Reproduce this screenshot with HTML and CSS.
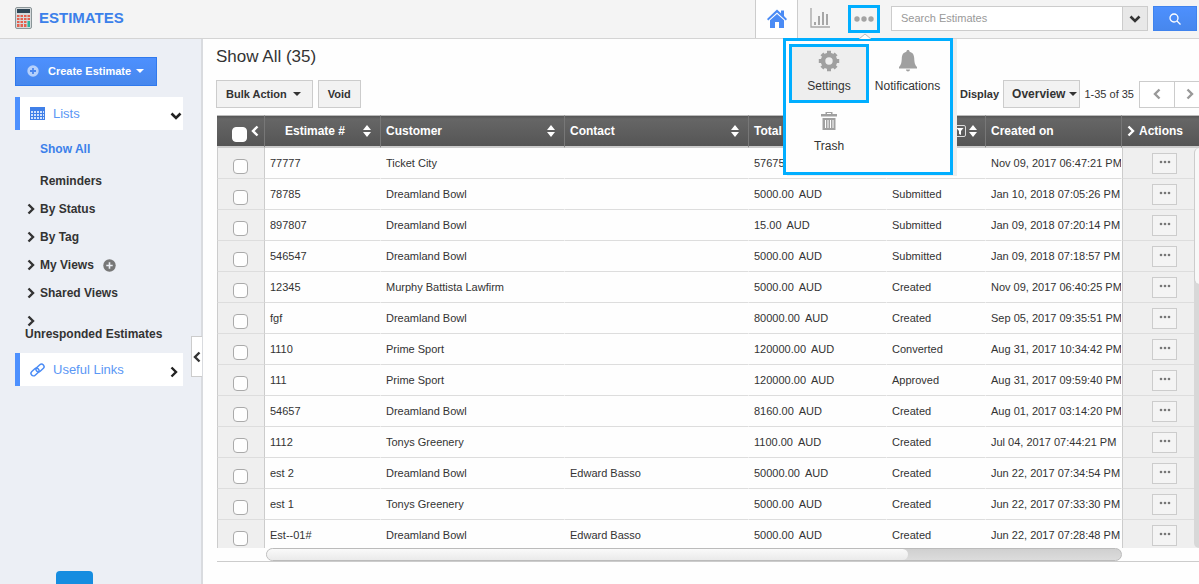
FILE: index.html
```html
<!DOCTYPE html>
<html lang="en">
<head>
<meta charset="utf-8">
<title>Estimates</title>
<link rel="stylesheet" href="styles.css">
</head>
<body>
<svg class="defs" aria-hidden="true">
  <symbol id="right" viewBox="0 0 8 12"><path d="M1.500 1.500L6 6l-4.500 4.500" fill="none" stroke="currentColor" stroke-width="2.400"/></symbol>
  <symbol id="left" viewBox="0 0 8 12"><path d="M6.500 1.500L2 6l4.500 4.500" fill="none" stroke="currentColor" stroke-width="2.400"/></symbol>
  <symbol id="down" viewBox="0 0 12 8"><path d="M1.500 1.500L6 6l4.500-4.500" fill="none" stroke="currentColor" stroke-width="2.600"/></symbol>
  <symbol id="sort" viewBox="0 0 8 12"><path d="M0 5L4 0l4 5zM0 7h8l-4 5z" fill="currentColor"/></symbol>
</svg>

<header class="topbar">
  <h1 class="brand">
    <svg class="brand-icon" width="17" height="22" viewBox="0 0 17 22"><rect x=".5" y=".5" width="16" height="21" rx="1.500" fill="#d5dadc" stroke="#8b9598"/><rect x="2" y="2" width="13" height="4" fill="#2f4656"/><path d="M2 8h2.500v2H2zm3.500 0H8v2H5.500zM9 8h2.500v2H9zm3.500 0H15v2h-2.500zM2 11h2.500v2H2zm3.500 0H8v2H5.500zm3.500 0h2.500v2H9zm3.500 0H15v2h-2.500zM2 14h2.500v2H2zm3.500 0H8v2H5.500zm3.500 0h2.500v2H9zM2 17h2.500v3H2zm3.500 0H8v3H5.500zm3.500 0h2.500v3H9z" fill="#e4604f"/><path d="M12.500 14H15v6h-2.500z" fill="#2bb39b"/></svg>
    ESTIMATES
  </h1>
  <nav class="tabs">
    <a class="tab tab-home" href="#" aria-label="Home"><svg width="20" height="20" viewBox="0 0 20 20" fill="#4a8bf5"><path d="M10 .500L0 10l1.200 1.400L10 3.500l8.800 7.900L20 10l-3-2.900V1.500h-3v2.800z"/><path d="M3 11.300l7-6.200 7 6.200V19h-5v-6H8v6H3z"/></svg></a>
    <a class="tab tab-chart" href="#" aria-label="Reports"><svg width="20" height="20" viewBox="0 0 20 20" fill="none" stroke="#a6a6a6"><path d="M1 0v19h19" stroke-width="1.300"/><path d="M5 14v3M9 8v9M13 4v13M17 6v11" stroke-width="2"/></svg></a>
    <div class="more">
      <button class="more-btn" aria-label="More"><svg width="20" height="6" viewBox="0 0 20 6" fill="#a3a3a3"><circle cx="3" cy="3" r="2.700"/><circle cx="10" cy="3" r="2.700"/><circle cx="17" cy="3" r="2.700"/></svg></button>
      <div class="menu">
        <svg class="menu-tip" width="12" height="6" viewBox="0 0 12 6"><path d="M0 6l6-5 6 5" fill="#fff" stroke="#bbb"/></svg>
        <a class="menu-item active" href="#"><svg width="22" height="22" viewBox="0 0 22 22" fill="none" stroke="#a0a0a0"><circle cx="11" cy="11" r="6" stroke-width="4.600"/><path d="M11 .800v3M11 18.200v3M.800 11h3M18.200 11h3M3.900 3.900l2 2M16.100 16.100l2 2M3.900 18.100l2-2M16.100 5.900l2-2" stroke-width="4"/></svg>Settings</a>
        <a class="menu-item" href="#"><svg width="18" height="22" viewBox="0 0 18 22" fill="#a0a0a0"><path d="M9 0c1 0 1.600.7 1.600 1.700C14 2.500 15 5 15.200 8c.2 5 .8 7 2.800 9v1.500H0V17c2-2 2.600-4 2.800-9C3 5 4 2.500 7.400 1.700 7.400.7 8 0 9 0zM7 19.500h4c0 1.300-.9 2-2 2s-2-.7-2-2z"/></svg>Notifications</a>
        <a class="menu-item" href="#"><svg width="16" height="20" viewBox="0 0 16 20" fill="#a0a0a0"><path d="M0 3h16v2.500H0zM4.500 3V1h7v2H10V2H6v1zM1.500 7h13v12h-13zM4 9v8h1V9zm2.500 0v8h1V9zM9 9v8h1V9zm2.500 0v8h1V9z" fill-rule="evenodd"/></svg>Trash</a>
      </div>
    </div>
  </nav>
  <form class="search">
    <input class="search-box" type="text" placeholder="Search Estimates" aria-label="Search Estimates">
    <button class="search-drop" type="button" aria-label="Search options"><svg width="12" height="8"><use href="#down"/></svg></button>
    <button class="search-go" type="button" aria-label="Search"><svg width="12" height="12" viewBox="0 0 12 12" fill="none" stroke="#fff" stroke-width="1.300"><circle cx="5" cy="5" r="4"/><path d="M8 8l3.500 3.500"/></svg></button>
  </form>
</header>

<div class="shell">
  <aside class="sidebar">
    <button class="create"><svg width="12" height="12" viewBox="0 0 12 12"><circle cx="6" cy="6" r="5.700" fill="#b5d0fb"/><path d="M6 3v6M3 6h6" stroke="#4a86ee" stroke-width="1.800"/></svg>Create Estimate<span class="caret"></span></button>
    <a class="section" href="#"><svg class="section-icon" width="15" height="13" viewBox="0 0 15 13"><path d="M0 0h15v13H0z" fill="#4080e8"/><path d="M1 4h2v2H1zm3 0h2v2H4zm3 0h2v2H7zm3 0h2v2h-2zm3 0h1v2h-1zM1 7h2v2H1zm3 0h2v2H4zm3 0h2v2H7zm3 0h2v2h-2zm3 0h1v2h-1zM1 10h2v2H1zm3 0h2v2H4zm3 0h2v2H7zm3 0h2v2h-2zm3 0h1v2h-1z" fill="#d3e3fc"/></svg>Lists<svg class="section-arrow" width="12" height="8"><use href="#down"/></svg></a>
    <ul class="nav">
      <li><a class="plain current" href="#">Show All</a></li>
      <li><a class="plain" href="#">Reminders</a></li>
      <li><a href="#"><svg width="8" height="12"><use href="#right"/></svg>By Status</a></li>
      <li><a href="#"><svg width="8" height="12"><use href="#right"/></svg>By Tag</a></li>
      <li><a href="#"><svg width="8" height="12"><use href="#right"/></svg>My Views</a><button class="add" aria-label="Add view"><svg width="13" height="13" viewBox="0 0 13 13"><circle cx="6.500" cy="6.500" r="6.200" fill="#777"/><path d="M6.500 3.300v6.400M3.300 6.500h6.400" stroke="#eceff5" stroke-width="1.600"/></svg></button></li>
      <li><a href="#"><svg width="8" height="12"><use href="#right"/></svg>Shared Views</a></li>
      <li><a class="stacked" href="#"><svg width="8" height="12"><use href="#right"/></svg>Unresponded Estimates</a></li>
    </ul>
    <a class="section" href="#"><svg class="section-icon" width="15" height="14" viewBox="0 0 15 14" fill="none" stroke="#4a8bf5" stroke-width="1.500"><rect x="5.500" y="2.500" width="9" height="5" rx="2.500" transform="rotate(-42 10 5)"/><rect x=".5" y="6.500" width="9" height="5" rx="2.500" transform="rotate(-42 5 9)"/></svg>Useful Links<svg class="section-arrow" width="8" height="12"><use href="#right"/></svg></a>
    <button class="collapse" aria-label="Collapse sidebar"><svg width="8" height="12"><use href="#left"/></svg></button>
    <button class="chat" aria-label="Chat"></button>
  </aside>

  <main class="main">
    <h2 class="title">Show All (35)</h2>
    <div class="toolbar">
      <button class="btn">Bulk Action<span class="caret"></span></button>
      <button class="btn">Void</button>
      <span class="display">Display</span>
      <button class="btn view">Overview<span class="caret"></span></button>
      <span class="range">1-35 of 35</span>
      <div class="pager"><button aria-label="Previous"><svg width="8" height="12"><use href="#left"/></svg></button><button aria-label="Next"><svg width="8" height="12"><use href="#right"/></svg></button></div>
    </div>
    <div class="grid">
      <div class="rows">
        <table>
          <colgroup><col class="c-check"><col class="c-num"><col><col><col class="c-total"><col class="c-status"><col class="c-date"><col class="c-act"></colgroup>
          <thead><tr>
            <th><div class="th-check"><input type="checkbox" aria-label="Select all"><svg width="8" height="12"><use href="#left"/></svg></div></th>
            <th><div class="th num">Estimate #<svg width="8" height="12"><use href="#sort"/></svg></div></th>
            <th><div class="th">Customer<svg width="8" height="12"><use href="#sort"/></svg></div></th>
            <th><div class="th">Contact<svg width="8" height="12"><use href="#sort"/></svg></div></th>
            <th><div class="th">Total</div></th>
            <th><div class="th"><span class="filter"><svg width="12" height="12" viewBox="0 0 12 12"><rect x=".5" y=".5" width="11" height="11" rx="1.500" fill="none" stroke="#ddd"/><path d="M2.500 3h7L7 6v4L5 9V6z" fill="#fff"/></svg><svg width="8" height="12"><use href="#sort"/></svg></span></div></th>
            <th><div class="th">Created on</div></th>
            <th><div class="th act"><svg width="8" height="12"><use href="#right"/></svg>Actions</div></th>
          </tr></thead>
          <tbody id="body"></tbody>
        </table>
        <div class="vscroll"></div>
      </div>
      <div class="hscroll"><div class="hthumb"></div></div>
    </div>
  </main>
</div>
<script src="app.js"></script>
</body>
</html>
```
FILE: app.js
```js
const rows = [
  ["77777", "Ticket City", "", "57675.00", "Created", "Nov 09, 2017 06:47:21 PM"],
  ["78785", "Dreamland Bowl", "", "5000.00", "Submitted", "Jan 10, 2018 07:05:26 PM"],
  ["897807", "Dreamland Bowl", "", "15.00", "Submitted", "Jan 09, 2018 07:20:14 PM"],
  ["546547", "Dreamland Bowl", "", "5000.00", "Submitted", "Jan 09, 2018 07:18:57 PM"],
  ["12345", "Murphy Battista Lawfirm", "", "5000.00", "Created", "Nov 09, 2017 06:40:25 PM"],
  ["fgf", "Dreamland Bowl", "", "80000.00", "Created", "Sep 05, 2017 09:35:51 PM"],
  ["1110", "Prime Sport", "", "120000.00", "Converted", "Aug 31, 2017 10:34:42 PM"],
  ["111", "Prime Sport", "", "120000.00", "Approved", "Aug 31, 2017 09:59:40 PM"],
  ["54657", "Dreamland Bowl", "", "8160.00", "Created", "Aug 01, 2017 03:14:20 PM"],
  ["1112", "Tonys Greenery", "", "1100.00", "Created", "Jul 04, 2017 07:44:21 PM"],
  ["est 2", "Dreamland Bowl", "Edward Basso", "50000.00", "Created", "Jun 22, 2017 07:34:54 PM"],
  ["est 1", "Tonys Greenery", "", "5000.00", "Created", "Jun 22, 2017 07:33:30 PM"],
  ["Est--01#", "Dreamland Bowl", "Edward Basso", "5000.00", "Created", "Jun 22, 2017 07:28:48 PM"]
];

document.getElementById("body").innerHTML = rows.map(([num, customer, contact, total, status, date]) => `
  <tr>
    <td class="check"><input type="checkbox" aria-label="Select ${num}"></td>
    <td>${num}</td><td>${customer}</td><td>${contact}</td>
    <td>${total}<span class="cur">AUD</span></td><td>${status}</td><td class="date">${date}</td>
    <td class="actions"><button class="dots" aria-label="Actions for ${num}"><svg width="12" height="4" viewBox="0 0 12 4" fill="#777"><circle cx="2" cy="2" r="1.300"/><circle cx="6" cy="2" r="1.300"/><circle cx="10" cy="2" r="1.300"/></svg></button></td>
  </tr>`).join("");
```
FILE: styles.css
```css
* { box-sizing: border-box; }
body {
  margin: 0;
  height: 100vh;
  display: flex;
  flex-direction: column;
  overflow: hidden;
  background: #fefefe;
  color: #333;
  font: 12px/16px "Liberation Sans", Arial, sans-serif;
}
a { color: inherit; text-decoration: none; }
button, input { font: inherit; color: inherit; margin: 0; padding: 0; }
button { border: 0; background: none; }
svg { display: block; flex: none; }
.defs { position: absolute; width: 0; height: 0; }
.caret {
  border: 4px solid transparent;
  border-top-color: currentColor;
  border-bottom: 0;
}

.topbar {
  flex: none;
  display: flex;
  height: 39px;
  background: #f4f4f4;
  border-bottom: 1px solid #d4d4d4;
}
.brand {
  flex: 1;
  display: flex;
  align-items: center;
  gap: 7px;
  margin: 0;
  padding: 0 0 3px 15px;
  color: #3b80ea;
  font-size: 15px;
}
.tabs { display: flex; }
.tab {
  display: flex;
  align-items: center;
  justify-content: center;
  width: 50px;
}
.tab-home {
  width: 43px;
  background: #fefefe;
  border: 1px solid #ccc;
  border-width: 0 1px;
}
.tab-chart { padding: 0 6px 2px 0; }
.more { position: relative; padding: 5px 11px 0 0; }
.more-btn {
  display: flex;
  align-items: center;
  justify-content: center;
  width: 32px;
  height: 28px;
  border: 3px solid #00aeff;
}
.menu {
  position: absolute;
  z-index: 2;
  top: 38px;
  right: -62px;
  display: grid;
  grid-template-columns: 80px 77px;
  align-content: start;
  row-gap: 1px;
  width: 170px;
  height: 137px;
  padding: 3px;
  background: #fefefe;
  border: 3px solid #00aeff;
  box-shadow: 4px 1px 0 #eee;
}
.menu-tip { position: absolute; top: -8px; left: 73px; }
.menu-item {
  display: flex;
  flex-direction: column;
  align-items: center;
  gap: 6px;
  height: 59px;
  padding-top: 6px;
}
.menu-item svg { height: 22px; }
.menu-item.active {
  padding-top: 3px;
  background: #eee;
  border: 3px solid #00aeff;
}
.search {
  display: flex;
  align-items: flex-start;
  padding: 6px 2px 0 0;
  font-size: 11px;
}
.search-box {
  width: 232px;
  height: 25px;
  padding: 0 9px 2px;
  background: #fff;
  border: 1px solid #ccc;
}
.search-box::placeholder { color: #999; }
.search-drop, .search-go, .collapse, .dots {
  display: flex;
  align-items: center;
  justify-content: center;
}
.search-drop {
  width: 25px;
  height: 25px;
  margin-right: 5px;
  background: #e8e8e8;
  border: 1px solid #ccc;
  border-left: 0;
}
.search-go {
  width: 44px;
  height: 25px;
  background: linear-gradient(#4d90fe, #4787ed);
  border: 1px solid #3f83ee;
}

.shell { flex: 1; display: flex; min-height: 0; }
.sidebar {
  position: relative;
  flex: none;
  width: 203px;
  padding: 18px 18px 0 15px;
  background: #eceff5;
  border-right: 2px solid #d9dbdf;
}
.create {
  display: flex;
  align-items: center;
  gap: 9px;
  width: 142px;
  height: 29px;
  margin-bottom: 11px;
  padding: 0 11px 2px;
  background: linear-gradient(#4d90fe, #4787ed);
  border: 1px solid #3079ed;
  color: #fff;
  font-size: 11px;
  font-weight: bold;
}
.create .caret { margin-left: -4px; }
.section {
  display: flex;
  align-items: center;
  height: 33px;
  padding-left: 10px;
  background: #fff;
  border-left: 5px solid #4d90fe;
  color: #5b97f5;
  font-size: 13px;
}
.section-icon { margin-right: 8px; }
.section-arrow { margin: 4px 1px 0 auto; color: #222; }
.section-arrow[height="12"] { margin-right: 5px; }
.nav { margin: 0; padding: 11px 0 12px; list-style: none; font-weight: bold; }
.nav li { display: flex; align-items: center; height: 28px; padding-left: 12px; }
.nav li:nth-child(-n+2) { height: 32px; align-items: flex-start; }
.nav a { display: flex; align-items: center; gap: 5px; }
.nav .plain { padding-left: 13px; }
.nav .current { color: #3b80ea; }
.nav li:nth-child(2) { height: 22px; }
.nav li:last-child { height: 34px; align-items: flex-end; padding-left: 10px; }
.nav .stacked { flex-direction: column; align-items: flex-start; gap: 0; line-height: 14px; }
.nav .stacked svg { margin-left: 2px; }
.add { margin-left: 9px; }
.collapse {
  position: absolute;
  right: -1px;
  top: 297px;
  width: 11px;
  height: 41px;
  background: #fff;
  border: 1px solid #ccc;
  border-right: 0;
}
.chat {
  position: absolute;
  left: 56px;
  bottom: 0;
  width: 37px;
  height: 13px;
  background: #168de0;
  border-radius: 4px 4px 0 0;
}

.main {
  flex: 1;
  min-width: 0;
  display: flex;
  flex-direction: column;
  padding: 8px 0 22px 13px;
  overflow: hidden;
}
.title { margin: 0 0 13px; font-size: 17px; font-weight: normal; line-height: 20px; }
.toolbar {
  display: flex;
  align-items: center;
  height: 28px;
  margin-bottom: 7px;
  font-size: 11px;
}
.btn {
  display: flex;
  align-items: center;
  gap: 6px;
  height: 28px;
  margin-right: 5px;
  padding: 0 11px 0 9px;
  background: #f2f2f2;
  border: 1px solid #ccc;
  font-weight: bold;
}
.btn:nth-child(2) { padding-right: 9px; }
.display { margin-left: auto; margin-right: 4px; font-weight: bold; }
.btn.view { gap: 4px; padding-left: 8px; padding-right: 2px; margin-right: 4px; font-size: 12px; }
.pager { display: flex; margin-left: 5px; height: 27px; color: #999; }
.pager button {
  width: 35px;
  padding: 0 0 0 13px;
  background: #fff;
  border: 1px solid #ccc;
  border-right: 0;
}
.pager button + button { width: 25px; padding-left: 11px; }

.grid {
  flex: 1;
  min-height: 0;
  display: flex;
  flex-direction: column;
  margin-left: 1px;
  border-bottom: 1px solid #ccc;
}
.rows { position: relative; flex: 1; min-height: 0; overflow: hidden; }
table { width: 100%; table-layout: fixed; border-collapse: separate; border-spacing: 0; }
.c-check { width: 48px; }
.c-num { width: 116px; }
.c-total { width: 138px; }
.c-status { width: 99px; }
.c-date { width: 136px; }
.c-act { width: 77px; }
th {
  height: 33px;
  padding: 0;
  background: linear-gradient(#555, #666 3px, #555);
  border-right: 1px solid #777;
  border-top: 1px solid #bbb;
  border-bottom: 2px solid #ccc;
  color: #fff;
  text-align: left;
}
th:last-child { border-right: 0; }
.th { display: flex; align-items: center; justify-content: space-between; padding: 0 9px 0 5px; }
.th.num { padding-left: 20px; }
.th.act { justify-content: flex-start; gap: 4px; }
.filter { display: flex; gap: 3px; margin: 0 -1px 0 auto; }
.th-check { display: flex; align-items: center; gap: 4px; padding-left: 15px; }
input[type="checkbox"] {
  appearance: none;
  display: block;
  width: 15px;
  height: 15px;
  background: #fefefe;
  border: 1px solid #aaa;
  border-radius: 4px;
}
.th-check input { margin-top: 6px; border-color: #fff; }
td {
  height: 31px;
  padding: 0 5px;
  border-right: 1px solid #fefefe;
  border-bottom: 1px solid #ddd;
  font-size: 11px;
  white-space: nowrap;
  overflow: hidden;
}
.date { padding-right: 0; }
.check {
  padding: 6px 0 0 15px;
  background: #efefef;
  border-left: 1px solid #ccc;
  border-right: 1px solid #ccc;
}
.cur { margin-left: 5px; }
.actions { padding: 0 0 0 29px; background: #efefef; border-left: 1px solid #ccc; }
.dots { width: 25px; height: 21px; background: #f4f4f4; border: 1px solid #ccc; padding-bottom: 3px; }
.vscroll {
  position: absolute;
  top: 33px;
  right: 0;
  bottom: 0;
  width: 5px;
  background: #d8d8d8;
  border-radius: 5px 0 0 5px;
}
.vscroll::before {
  content: "";
  display: block;
  height: 34%;
  background: #f8f8f8;
  border-left: 1px solid #ccc;
  border-radius: 5px 0 0 5px;
}
.hscroll {
  flex: none;
  height: 13px;
  margin: 0 77px 0 49px;
  background: linear-gradient(#d0d0d0, #dcdcdc);
  border: 1px solid #bbb;
  border-radius: 7px;
}
.hthumb {
  width: 75%;
  height: 100%;
  background: linear-gradient(#fafafa, #eaeaea);
  border-radius: 6px;
}
```
